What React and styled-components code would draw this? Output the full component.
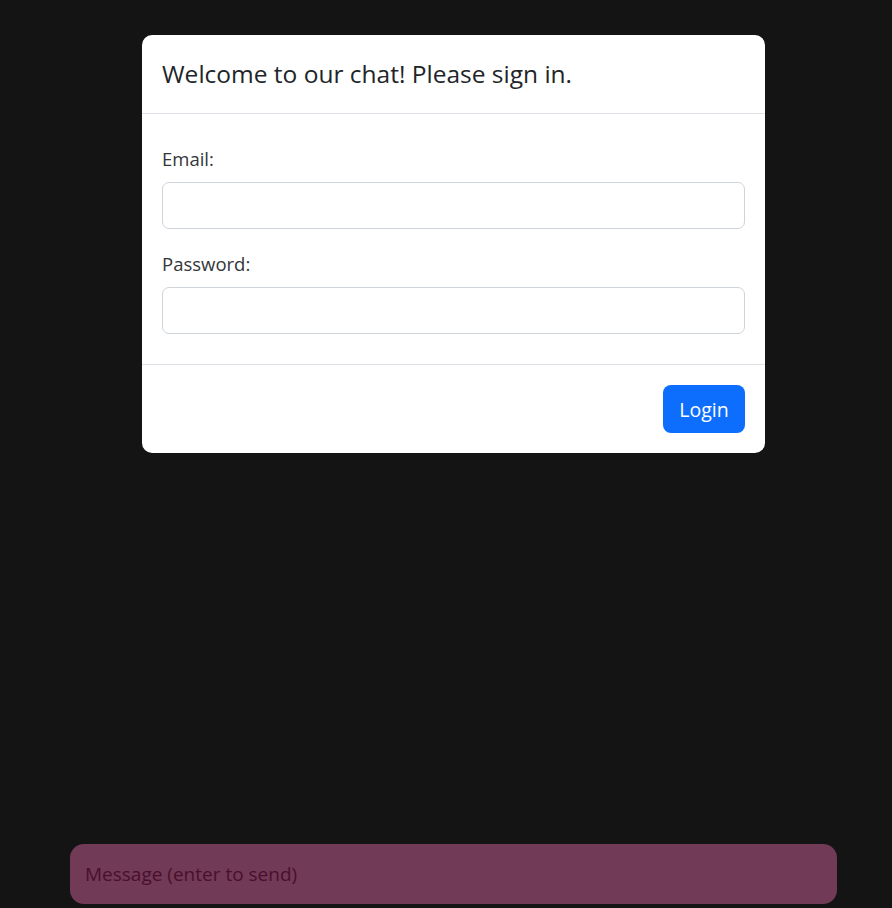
import React, { useState } from "react";
import styled, { createGlobalStyle } from "styled-components";

const GlobalStyle = createGlobalStyle`
  html, body {
    margin: 0;
    padding: 0;
    background: #141414;
  }
  * {
    box-sizing: border-box;
  }
`;

export default function App() {
  const [email, setEmail] = useState("");
  const [password, setPassword] = useState("");
  const [message, setMessage] = useState("");

  return (
    <Page>
      <GlobalStyle />
      <Modal>
        <ModalHeader>
          <ModalTitle>Welcome to our chat! Please sign in.</ModalTitle>
        </ModalHeader>
        <ModalBody>
          <FormGroup>
            <Label htmlFor="email">Email:</Label>
            <Input id="email" type="email" value={email} onChange={(e) => setEmail(e.target.value)} />
          </FormGroup>
          <FormGroup last>
            <Label htmlFor="password">Password:</Label>
            <Input id="password" type="password" value={password} onChange={(e) => setPassword(e.target.value)} />
          </FormGroup>
        </ModalBody>
        <ModalFooter>
          <LoginButton>Login</LoginButton>
        </ModalFooter>
      </Modal>
      <Spacer />
      <MessageInput
        placeholder="Message (enter to send)"
        value={message}
        onChange={(e) => setMessage(e.target.value)}
      />
    </Page>
  );
}

const Page = styled.div`
  min-height: 100vh;
  display: flex;
  flex-direction: column;
  font-family: "Open Sans", "Liberation Sans", sans-serif;
  color: #212529;
`;

const Modal = styled.div`
  width: 623px;
  margin: 35px 0 0 142px;
  background: #fff;
  border-radius: 10px;
`;

const ModalHeader = styled.div`
  padding: 20px;
  border-bottom: 1px solid #dee2e6;
`;

const ModalTitle = styled.h5`
  margin: 0;
  font-size: 24.5px;
  font-weight: 500;
  line-height: 38px;
  color: #212529;
`;

const ModalBody = styled.div`
  padding: 30px 20px 30px;
`;

const FormGroup = styled.div`
  display: flex;
  flex-direction: column;
  margin-bottom: ${(p) => (p.last ? "0" : "20px")};
`;

const Label = styled.label`
  font-size: 18.5px;
  line-height: 30px;
  margin-bottom: 8px;
  color: #333639;
`;

const Input = styled.input`
  height: 47px;
  padding: 7px 15px;
  font-size: 20px;
  font-family: inherit;
  border: 1px solid #ced4da;
  border-radius: 7px;
  outline: none;
`;

const ModalFooter = styled.div`
  display: flex;
  justify-content: flex-end;
  padding: 20px;
  border-top: 1px solid #dee2e6;
`;

const LoginButton = styled.button`
  height: 48px;
  width: 82px;
  border: none;
  border-radius: 8px;
  background: #0d6efd;
  color: #fff;
  font-size: 19.5px;
  font-family: inherit;
  cursor: pointer;
`;

const Spacer = styled.div`
  flex: 1;
`;

const MessageInput = styled.input`
  width: 767px;
  height: 60px;
  margin: 0 0 4px 70px;
  padding: 0 15px;
  border: none;
  border-radius: 14px;
  background: #713a56;
  font-size: 19px;
  font-family: "Open Sans", "Liberation Sans", sans-serif;
  outline: none;
  color: #4a0f2d;

  &::placeholder {
    color: #4a0f2d;
  }
`;
